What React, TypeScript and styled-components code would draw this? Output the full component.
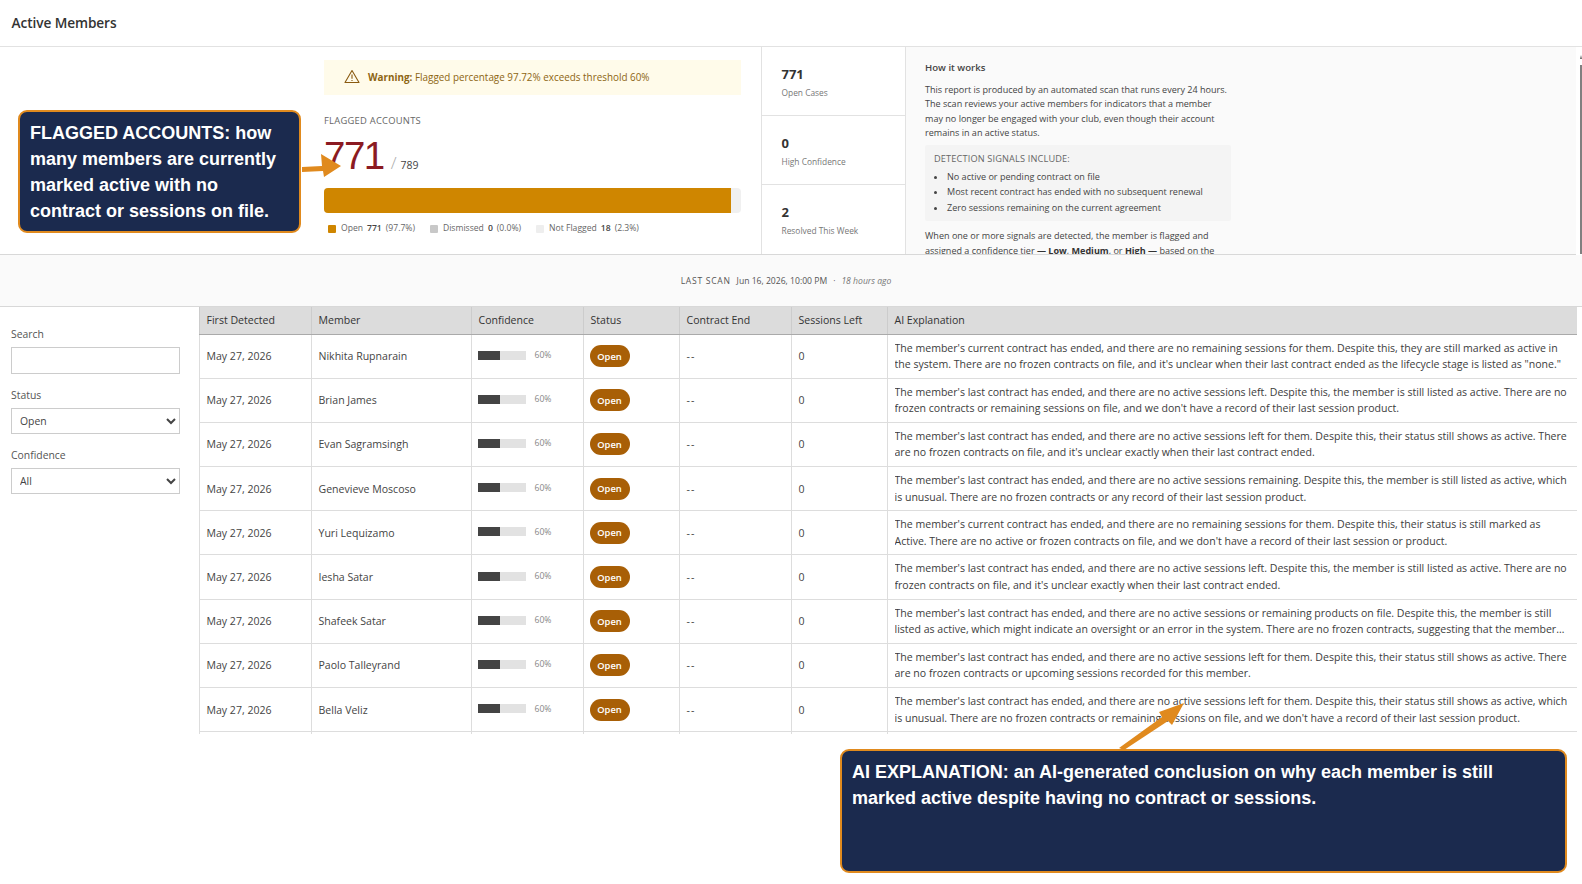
import React from "react";
import styled, { createGlobalStyle } from "styled-components";

const Global = createGlobalStyle`
  html, body { margin: 0; padding: 0; height: 884px; overflow: hidden; background: #fff; }
  * { box-sizing: border-box; }
  #root { height: 884px; }
  body { font-family: "Open Sans", "Noto Sans", sans-serif; color: #333; }
`;

const Page = styled.div`position: relative; width: 1582px; height: 884px; display: flex; flex-direction: column; overflow: hidden;`;
const Header = styled.header`height: 47px; border-bottom: 1px solid #e2e2e2; padding: 13px 0 0 11.5px; font-size: 13.7px; font-weight: 600; color: #333; letter-spacing: -.1px;`;
const Top = styled.section`height: 208px; display: flex; border-bottom: 1px solid #d8d8d8; margin-right: 6px;`;
const Summary = styled.div`width: 761px; padding: 13px 20px 0 324px; flex: none;`;
const Warning = styled.div`height: 35px; background: #fffbea; display: flex; align-items: center; gap: 8px; padding: 0 0 2px 20px; font-size: 9.9px; color: #8d6512;
  b { font-weight: 700; }`;
const SectionLabel = styled.div`margin-top: 19px; font-size: 9.4px; letter-spacing: .25px; color: #666; line-height: 13px;`;
const Count = styled.div`display: flex; align-items: baseline; height: 56px; margin-top: 5px;`;
const Big = styled.span`font-family: "Liberation Sans", sans-serif; font-size: 38.5px; line-height: 47px; color: #8b1a22; letter-spacing: -1.5px;`;
const Slash = styled.span`font-size: 17px; color: #aaa; font-weight: 300; margin: 0 4px 0 7px;`;
const Total = styled.span`font-size: 10.5px; color: #444;`;
const Bar = styled.div`height: 25px; border-radius: 4px; background: #f0f0f0; overflow: hidden;`;
const BarFill = styled.div`height: 100%; background: #cf8600;`;
const Legend = styled.div`display: flex; gap: 15px; margin-top: 10px; padding-left: 4px; font-size: 8.6px; color: #666; line-height: 11px;`;
const LegendItem = styled.span`display: flex; align-items: center; gap: 4px;
  b { font-weight: 600; color: #444; }
  i { font-style: normal; }`;
const Swatch = styled.span<{ $c: string }>`width: 8px; height: 8px; border-radius: 1px; background: ${p => p.$c}; margin-right: 1px;`;
const Stats = styled.div`width: 145px; flex: none; border-left: 1px solid #e2e2e2; border-right: 1px solid #e2e2e2;`;
const Stat = styled.div`height: 69px; padding: 19px 0 0 19.5px; border-bottom: 1px solid #e2e2e2; &:last-child { border-bottom: none; }`;
const StatValue = styled.div`font-size: 13px; font-weight: 700; color: #333; line-height: 17px;`;
const StatLabel = styled.div`font-size: 8.4px; color: #777; line-height: 12px; margin-top: 3.5px;`;
const How = styled.aside`flex: 1; background: #fafafa; padding: 14px 0 0 19px; overflow: hidden; font-size: 9.05px; line-height: 14.4px; color: #444;`;
const HowInner = styled.div`width: 306px;`;
const HowTitle = styled.div`font-weight: 600; color: #444; font-size: 9.6px; margin-bottom: 7.5px;`;
const Para = styled.p`margin: 0; b { font-weight: 700; color: #333; }`;
const SignalBox = styled.div`background: #f4f4f4; border-radius: 2px; margin: 4px 0 8px; padding: 7px 9px 6px;`;
const SignalTitle = styled.div`font-size: 9.2px; color: #666; letter-spacing: .15px; line-height: 14px; margin-bottom: 3px;`;
const SignalList = styled.ul`margin: 0; padding: 0 0 0 13px; li { line-height: 15.6px; }`;
const ScanBar = styled.div`height: 52px; background: #fafafa; border-bottom: 1px solid #d8d8d8; display: flex; align-items: center; justify-content: center; gap: 6px; font-size: 8.6px; color: #555; padding-right: 10px;
  em { color: #777; }`;
const ScanLabel = styled.span`letter-spacing: .7px;`;
const Main = styled.div`display: flex; height: 428px;`;
const Sidebar = styled.div`width: 199px; flex: none; padding: 20px 19px 0 11px;`;
const FieldLabel = styled.label`display: block; font-size: 10.4px; color: #555; line-height: 14px; margin-bottom: 6px;`;
const Field = styled.div`margin-bottom: 14px;`;
const TextInput = styled.input`display: block; width: 169px; height: 27px; border: 1px solid #ccc; background: #fff; padding: 0 8px; border-radius: 0;`;
const Select = styled.select`display: block; width: 169px; height: 26px; border: 1px solid #ccc; background: #fff; padding: 0 4px; font-family: inherit; font-size: 10.4px; color: #444; border-radius: 0;`;
const TableWrap = styled.div`width: 1378px; overflow: hidden; height: 427px;`;
const Table = styled.table`width: 1378px; table-layout: fixed; border-collapse: collapse; font-size: 10.56px; color: #444;`;
const Th = styled.th`height: 27px; background: #dcdcdc; border: 1px solid #ccc; border-top: none; border-bottom: 1px solid #aaa; text-align: left; font-weight: 400; color: #333; padding: 0 6.5px; font-size: 10.56px;`;
const Td = styled.td`height: 44.2px; border: 1px solid #ddd; padding: 0 6.5px; vertical-align: middle;`;
const Explain = styled.div`line-height: 16.6px; display: -webkit-box; -webkit-box-orient: vertical; -webkit-line-clamp: 2; overflow: hidden; color: #3c3c3c;`;
const Conf = styled.div`display: flex; align-items: center; gap: 9px; font-size: 8.6px; color: #888; margin: 0 0 2px -1px;`;
const ConfTrack = styled.div`width: 48px; height: 9px; background: #e2e2e2;`;
const ConfFill = styled.div`height: 100%; background: #444;`;
const Pill = styled.span`display: inline-flex; align-items: center; justify-content: center; width: 40px; height: 22px; margin-left: -1px; border-radius: 11px; background: #a85f06; color: #fff; font-size: 9.4px; font-weight: 600;`;
const Dash = styled.span`letter-spacing: 1.2px;`;
const Callout = styled.div<{ $l: number; $t: number; $w: number; $h: number }>`position: absolute; left: ${p => p.$l}px; top: ${p => p.$t}px; width: ${p => p.$w}px; height: ${p => p.$h}px; background: #1b2a4e; border: 2.5px solid #e08a1e; border-radius: 9px; color: #fff; font-family: "Liberation Sans", Arial, sans-serif; font-size: 18px; font-weight: 700; line-height: 26px; padding: 8px 9px 8px 10px;`;
const Arrow = styled.svg`position: absolute; left: 0; top: 0; pointer-events: none;`;
const Scroll = styled.div`position: absolute; left: 1580px; top: 65px; width: 2px; height: 189px; background: #808080;`;
const ScrollTip = styled.div`position: absolute; left: 1580px; top: 55px; width: 0; height: 0; border-left: 1.5px solid transparent; border-right: 1.5px solid transparent; border-bottom: 4px solid #666;`;

const rows: [string, string][] = [
  ["Nikhita Rupnarain", "The member's current contract has ended, and there are no remaining sessions for them. Despite this, they are still marked as active in the system. There are no frozen contracts on file, and it's unclear when their last contract ended as the lifecycle stage is listed as \"none.\""],
  ["Brian James", "The member's last contract has ended, and there are no active sessions left. Despite this, the member is still listed as active. There are no frozen contracts or remaining sessions on file, and we don't have a record of their last session product."],
  ["Evan Sagramsingh", "The member's last contract has ended, and there are no active sessions left for them. Despite this, their status still shows as active. There are no frozen contracts on file, and it's unclear exactly when their last contract ended."],
  ["Genevieve Moscoso", "The member's last contract has ended, and there are no active sessions remaining. Despite this, the member is still listed as active, which is unusual. There are no frozen contracts or any record of their last session product."],
  ["Yuri Lequizamo", "The member's current contract has ended, and there are no remaining sessions for them. Despite this, their status is still marked as Active. There are no active or frozen contracts on file, and we don't have a record of their last session or product."],
  ["Iesha Satar", "The member's last contract has ended, and there are no active sessions left. Despite this, the member is still listed as active. There are no frozen contracts on file, and it's unclear exactly when their last contract ended."],
  ["Shafeek Satar", "The member's last contract has ended, and there are no active sessions or remaining products on file. Despite this, the member is still listed as active, which might indicate an oversight or an error in the system. There are no frozen contracts, suggesting that the member may have been overlooked during a recent review of the account."],
  ["Paolo Talleyrand", "The member's last contract has ended, and there are no active sessions left for them. Despite this, their status still shows as active. There are no frozen contracts or upcoming sessions recorded for this member."],
  ["Bella Veliz", "The member's last contract has ended, and there are no active sessions left for them. Despite this, their status still shows as active, which is unusual. There are no frozen contracts or remaining sessions on file, and we don't have a record of their last session product."],
];

const widths = [112, 160, 112, 96, 112, 96, 690];
const heads = ["First Detected", "Member", "Confidence", "Status", "Contract End", "Sessions Left", "AI Explanation"];

export default function App() {
  return (
    <Page>
      <Global />
      <Header>Active Members</Header>
      <Top>
        <Summary>
          <Warning>
            <svg width="16" height="15" viewBox="0 0 16 15" fill="none" stroke="#8a5a10" strokeWidth="1.1" strokeLinejoin="round">
              <path d="M8 1.5 L15 13.5 H1 Z" />
              <path d="M8 5.5 V9.8 M8 11 V12" />
            </svg>
            <span><b>Warning:</b> Flagged percentage 97.72% exceeds threshold 60%</span>
          </Warning>
          <SectionLabel>FLAGGED ACCOUNTS</SectionLabel>
          <Count><Big>771</Big><Slash>/</Slash><Total>789</Total></Count>
          <Bar><BarFill style={{ width: `${(771 / 789) * 100}%` }} /></Bar>
          <Legend>
            <LegendItem><Swatch $c="#cf8600" />Open <b>771</b> <i>(97.7%)</i></LegendItem>
            <LegendItem><Swatch $c="#c8c8c8" />Dismissed <b>0</b> <i>(0.0%)</i></LegendItem>
            <LegendItem><Swatch $c="#eeeeee" />Not Flagged <b>18</b> <i>(2.3%)</i></LegendItem>
          </Legend>
        </Summary>
        <Stats>
          <Stat><StatValue>771</StatValue><StatLabel>Open Cases</StatLabel></Stat>
          <Stat><StatValue>0</StatValue><StatLabel>High Confidence</StatLabel></Stat>
          <Stat><StatValue>2</StatValue><StatLabel>Resolved This Week</StatLabel></Stat>
        </Stats>
        <How>
          <HowInner>
            <HowTitle>How it works</HowTitle>
            <Para>This report is produced by an automated scan that runs every 24 hours. The scan reviews your active members for indicators that a member may no longer be engaged with your club, even though their account remains in an active status.</Para>
            <SignalBox>
              <SignalTitle>DETECTION SIGNALS INCLUDE:</SignalTitle>
              <SignalList>
                <li>No active or pending contract on file</li>
                <li>Most recent contract has ended with no subsequent renewal</li>
                <li>Zero sessions remaining on the current agreement</li>
              </SignalList>
            </SignalBox>
            <Para>When one or more signals are detected, the member is flagged and assigned a confidence tier <b>— Low</b>, <b>Medium</b>, or <b>High —</b> based on the</Para>
          </HowInner>
        </How>
      </Top>
      <ScanBar>
        <ScanLabel>LAST SCAN</ScanLabel><span>Jun 16, 2026, 10:00 PM</span><span>·</span><em>18 hours ago</em>
      </ScanBar>
      <Main>
        <Sidebar>
          <Field><FieldLabel>Search</FieldLabel><TextInput /></Field>
          <Field><FieldLabel>Status</FieldLabel><Select defaultValue="Open"><option>Open</option><option>Dismissed</option></Select></Field>
          <Field><FieldLabel>Confidence</FieldLabel><Select defaultValue="All"><option>All</option><option>High</option></Select></Field>
        </Sidebar>
        <TableWrap>
          <Table>
            <colgroup>{widths.map((w, i) => <col key={i} style={{ width: w }} />)}</colgroup>
            <thead><tr>{heads.map(h => <Th key={h}>{h}</Th>)}</tr></thead>
            <tbody>
              {rows.map(([name, text]) => (
                <tr key={name}>
                  <Td>May 27, 2026</Td>
                  <Td>{name}</Td>
                  <Td><Conf><ConfTrack><ConfFill style={{ width: "46%" }} /></ConfTrack>60%</Conf></Td>
                  <Td><Pill>Open</Pill></Td>
                  <Td><Dash>--</Dash></Td>
                  <Td>0</Td>
                  <Td><Explain>{text}</Explain></Td>
                </tr>
              ))}
              <tr>{heads.map(h => <Td key={h} />)}</tr>
            </tbody>
          </Table>
        </TableWrap>
      </Main>
      <Scroll /><ScrollTip />
      <Callout $l={18} $t={110} $w={283} $h={123}>FLAGGED ACCOUNTS: how many members are currently marked active with no contract or sessions on file.</Callout>
      <Callout $l={840} $t={749} $w={727} $h={124}>AI EXPLANATION: an AI-generated conclusion on why each member is still marked active despite having no contract or sessions.</Callout>
      <Arrow width="1582" height="884" viewBox="0 0 1582 884" fill="#e08a1e">
        <path d="M302 167 L322 166 L321 154 L341 166 L324 177 L323 171 L302 172 Z" />
        <path d="M1119 748 L1162 717 L1159 712 L1184 703 L1172 725 L1168 721 L1124 750 Z" />
      </Arrow>
    </Page>
  );
}
